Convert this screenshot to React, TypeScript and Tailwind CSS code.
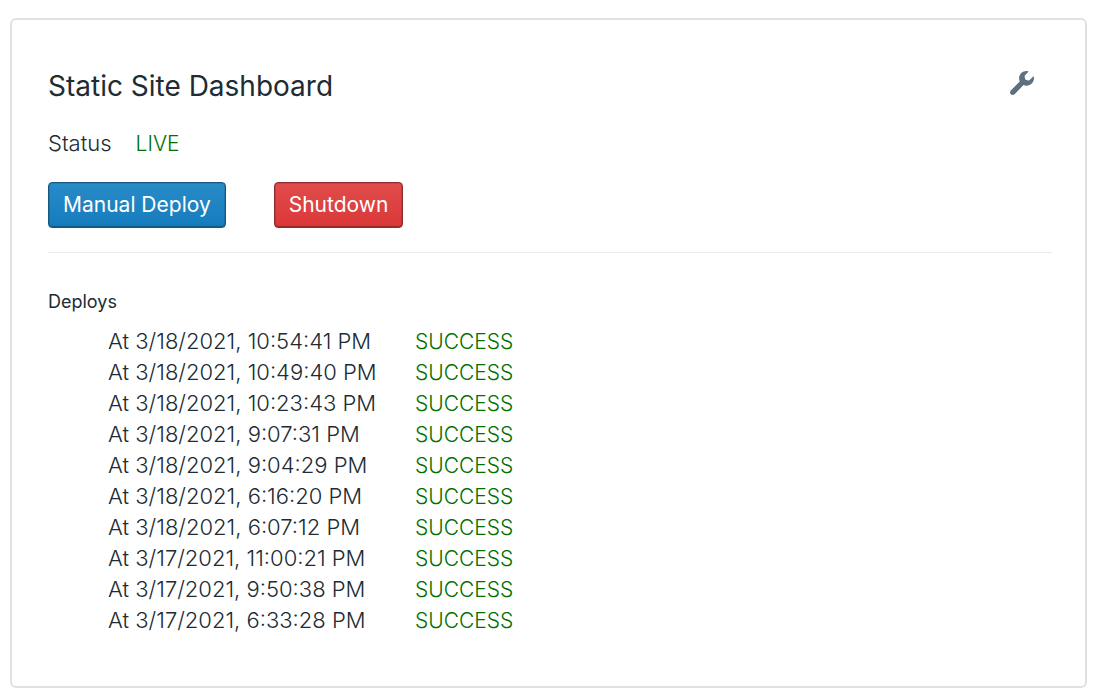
const deploys = [
  "3/18/2021, 10:54:41 PM",
  "3/18/2021, 10:49:40 PM",
  "3/18/2021, 10:23:43 PM",
  "3/18/2021, 9:07:31 PM",
  "3/18/2021, 9:04:29 PM",
  "3/18/2021, 6:16:20 PM",
  "3/18/2021, 6:07:12 PM",
  "3/17/2021, 11:00:21 PM",
  "3/17/2021, 9:50:38 PM",
  "3/17/2021, 6:33:28 PM",
];

function WrenchIcon() {
  return (
    <svg viewBox="0 0 24 24" className="size-6" fill="currentColor" aria-hidden="true">
      <path d="M16.5 0C18 0 18.7.4 18.4.8L15.1 4.3C14.5 5 14.6 5.6 14.8 6.4L15.2 8C15.4 8.7 15.8 9 16.5 9.1L18.2 9.4C19 9.5 19.4 9.3 19.9 8.8L23.2 5.6C23.7 5.2 24 5.8 24 7C24 11.2 20.8 14.7 16.6 14.7C15.4 14.7 14.4 14.5 13.5 14.1L4.8 22.9C3.6 24.1 1.9 24.2.8 23.2S-.2 20.4 1 19.2L9.8 10.4C9.3 9.4 9.1 8.5 9.1 7.4C9.1 3.2 12.4 0 16.5 0Z" />
    </svg>
  );
}

export default function App() {
  return (
    <div className="min-h-screen bg-white pt-[18px] pr-5 pb-2 pl-2.5 font-['Inter',sans-serif] text-[22px] font-light text-[#202b33]">
      <main className="rounded-md border-2 border-[#e0e1e2] pt-12 pr-[33px] pb-[50px] pl-9">
        <header className="flex items-start justify-between pr-[18px]">
          <h1 className="text-[28px] leading-9 font-normal">Static Site Dashboard</h1>
          <button type="button" aria-label="Settings" className="mt-[3px] text-[#5c7080]">
            <WrenchIcon />
          </button>
        </header>
        <p className="mt-6 flex gap-6 leading-[31px]">
          <span>Status</span>
          <span className="text-[21px] text-[#007000]">LIVE</span>
        </p>
        <div className="mt-[23px] flex gap-12">
          <button type="button" className="h-[46px] rounded border border-[#18587f] bg-linear-to-b from-[#298bc8] to-[#137cbd] px-3.5 text-[21px] leading-6 font-normal text-white shadow-[inset_0_0_0_1px_rgba(16,22,26,0.12),inset_0_-1px_1px_rgba(16,22,26,0.25)]">
            Manual Deploy
          </button>
          <button type="button" className="h-[46px] rounded border border-[#8e2c2f] bg-linear-to-b from-[#e04c4c] to-[#db3737] px-3.5 text-[21px] leading-6 font-normal text-white shadow-[inset_0_0_0_1px_rgba(16,22,26,0.12),inset_0_-1px_1px_rgba(16,22,26,0.25)]">
            Shutdown
          </button>
        </div>
        <hr className="mt-6 border-[#ebebeb]" />
        <h2 className="mt-[37px] text-lg leading-6 font-normal">Deploys</h2>
        <table className="mt-3 ml-[60px]">
          <tbody>
            {deploys.map((time) => (
              <tr key={time}>
                <td className="w-[307px] p-0 leading-[31px]">At {time}</td>
                <td className="p-0 text-[21px] leading-[31px] text-[#007000]">SUCCESS</td>
              </tr>
            ))}
          </tbody>
        </table>
      </main>
    </div>
  );
}
